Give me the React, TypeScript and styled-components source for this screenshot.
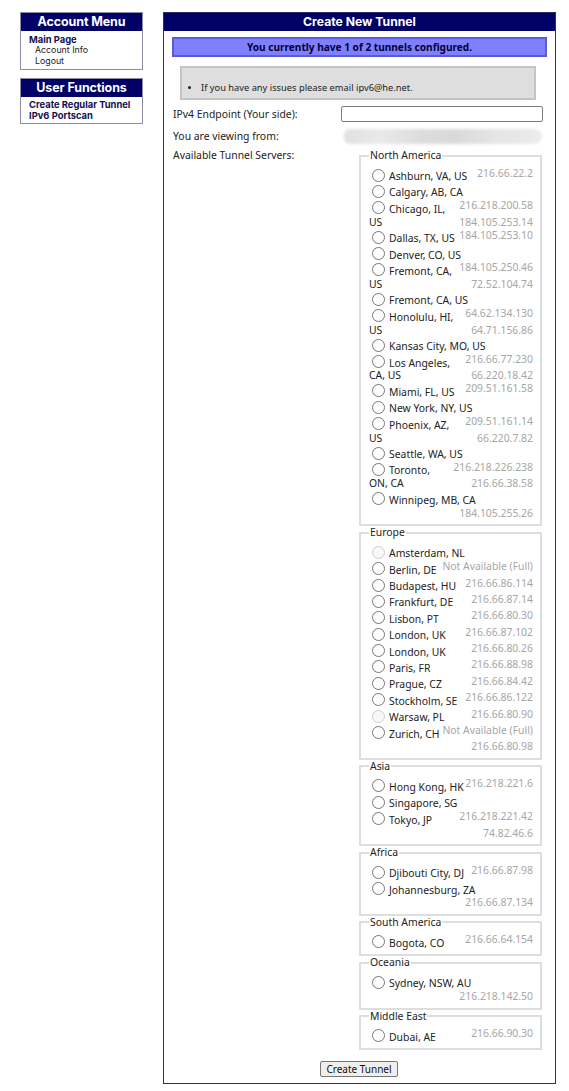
import React from 'react';
import styled, { createGlobalStyle } from 'styled-components';

const Global = createGlobalStyle`
  html, body { margin: 0; padding: 0; background: #fff; }
  body { font-family: "Noto Sans", "DejaVu Sans", sans-serif; color: #222; }
`;

const Page = styled.div`
  display: flex;
  align-items: flex-start;
  gap: 20px;
  padding: 12px 0 8px 20px;
`;

const Sidebar = styled.div`
  width: 123px;
  display: flex;
  flex-direction: column;
  gap: 8px;
`;

const MenuBox = styled.div`
  border: 1px solid #8c8ca6;
  background: #fff;
`;

const BoxTitle = styled.div`
  background: #000066;
  color: #fff;
  font-family: Inter, "Noto Sans", sans-serif;
  font-weight: 700;
  font-size: 12.5px;
  height: 18px;
  line-height: 18px;
  text-align: center;
  letter-spacing: -0.1px;
`;

const MenuList = styled.div<{ $pt: number; $pb: number }>`
  display: flex;
  flex-direction: column;
  padding: ${(p) => p.$pt}px 0 ${(p) => p.$pb}px 8px;
`;

const MenuLink = styled.a<{ $main?: boolean }>`
  font-family: Inter, "Noto Sans", sans-serif;
  font-size: ${(p) => (p.$main ? 9.4 : 8.8)}px;
  line-height: 10.6px;
  text-decoration: none;
  color: ${(p) => (p.$main ? '#11114d' : '#222')};
  font-weight: ${(p) => (p.$main ? 700 : 400)};
  padding-left: ${(p) => (p.$main ? 0 : 6)}px;
  white-space: nowrap;
`;

const Main = styled.div`
  width: 391px;
  border: 1px solid #2e2e5c;
  display: flex;
  flex-direction: column;
  padding-bottom: 6px;
`;

const MainTitle = styled.div`
  background: #000066;
  color: #fff;
  font-family: Inter, "Noto Sans", sans-serif;
  font-weight: 700;
  font-size: 12.2px;
  height: 18px;
  line-height: 18px;
  text-align: center;
`;

const Notice = styled.div`
  margin: 6px 8px 0 8px;
  height: 16px;
  background: #8080ff;
  border: 2px solid #5a5ae0;
  color: #000033;
  font-size: 10.1px;
  font-weight: 700;
  line-height: 16px;
  text-align: center;
`;

const InfoBox = styled.div`
  margin: 9px 19px 0 16px;
  height: 26px;
  background: #dedede;
  border: 2px solid #c4c4c4;
  display: flex;
  align-items: flex-end;
  padding: 0 0 4px 0;
`;

const InfoList = styled.ul`
  margin: 0;
  padding: 0 0 0 19px;
  font-size: 9.3px;
  line-height: 13px;
  color: #222;
  li::marker { font-size: 8px; }
`;

const FormGrid = styled.div`
  display: grid;
  grid-template-columns: 168px 202px;
  margin: 4px 0 0 9px;
  row-gap: 2px;
`;

const Label = styled.div<{ $top?: boolean }>`
  font-size: 10.4px;
  line-height: 13px;
  color: #222;
  height: ${(p) => (p.$top ? 'auto' : '20px')};
  display: flex;
  align-items: ${(p) => (p.$top ? 'flex-start' : 'center')};
  margin-top: ${(p) => (p.$top ? 1 : 0)}px;
  white-space: nowrap;
`;

const Cell = styled.div<{ $top?: boolean }>`
  height: ${(p) => (p.$top ? 'auto' : '20px')};
  display: flex;
  align-items: center;
  flex-direction: ${(p) => (p.$top ? 'column' : 'row')};
  margin-top: ${(p) => (p.$top ? 1 : 0)}px;
`;

const TextInput = styled.input`
  box-sizing: border-box;
  width: 202px;
  height: 16px;
  border: 1px solid #7a7a7a;
  border-radius: 2px;
  padding: 0 3px;
  font-size: 10px;
  background: #fff;
`;

const Blurred = styled.div`
  width: 198px;
  height: 15px;
  margin-left: 3px;
  border-radius: 8px 10px 10px 8px;
  background: linear-gradient(90deg, #e0e0e0 0%, #e9e9e9 18%, #dcdcdc 40%, #d9d9d9 55%, #e4e4e4 75%, #ececec 100%);
  filter: blur(1.8px);
`;

const Servers = styled.div`
  display: flex;
  flex-direction: column;
  width: 183px;
  margin-left: 18px;
  align-self: flex-start;
`;

const Region = styled.fieldset`
  margin: 0;
  border: 2px solid #dedede;
  padding: 4.5px 7px 4.5px 8px;
  min-width: 0;
`;

const Legend = styled.legend`
  font-size: 10.4px;
  line-height: 13px;
  padding: 0 1px;
  color: #222;
`;

const Line = styled.div<{ $radio: boolean }>`
  display: flex;
  justify-content: space-between;
  align-items: flex-start;
  height: ${(p) => (p.$radio ? 16.4 : 13)}px;
  font-size: 10.4px;
  line-height: 13px;
`;

const Place = styled.label<{ $radio: boolean }>`
  display: flex;
  align-items: flex-start;
  white-space: nowrap;
  color: #222;
  padding-top: ${(p) => (p.$radio ? 3.5 : 0)}px;
`;

const Radio = styled.input`
  width: 13px;
  height: 13px;
  margin: -1.5px 4px 0 3px;
  flex: none;
`;

const Ip = styled.span`
  color: #a6a6a6;
  white-space: nowrap;
  margin-left: auto;
`;

const ButtonRow = styled.div`
  display: flex;
  justify-content: center;
  margin-top: 11px;
`;

const Button = styled.button`
  font-family: "Noto Sans", sans-serif;
  font-size: 10px;
  height: 16px;
  line-height: 12px;
  padding: 0 5px;
  background: #efefef;
  border: 1px solid #767676;
  border-radius: 2px;
  color: #111;
  margin-left: -1px;
`;

type Row = [number, string, string?]; // 0 = text only, 1 = radio, 2 = disabled radio

const regions: { name: string; rows: Row[] }[] = [
  {
    name: 'North America',
    rows: [
      [1, 'Ashburn, VA, US', '216.66.22.2'],
      [1, 'Calgary, AB, CA'],
      [1, 'Chicago, IL,', '216.218.200.58'],
      [0, 'US', '184.105.253.14'],
      [1, 'Dallas, TX, US', '184.105.253.10'],
      [1, 'Denver, CO, US'],
      [1, 'Fremont, CA,', '184.105.250.46'],
      [0, 'US', '72.52.104.74'],
      [1, 'Fremont, CA, US'],
      [1, 'Honolulu, HI,', '64.62.134.130'],
      [0, 'US', '64.71.156.86'],
      [1, 'Kansas City, MO, US'],
      [1, 'Los Angeles,', '216.66.77.230'],
      [0, 'CA, US', '66.220.18.42'],
      [1, 'Miami, FL, US', '209.51.161.58'],
      [1, 'New York, NY, US'],
      [1, 'Phoenix, AZ,', '209.51.161.14'],
      [0, 'US', '66.220.7.82'],
      [1, 'Seattle, WA, US'],
      [1, 'Toronto,', '216.218.226.238'],
      [0, 'ON, CA', '216.66.38.58'],
      [1, 'Winnipeg, MB, CA'],
      [0, '', '184.105.255.26'],
    ],
  },
  {
    name: 'Europe',
    rows: [
      [2, 'Amsterdam, NL'],
      [1, 'Berlin, DE', 'Not Available (Full)'],
      [1, 'Budapest, HU', '216.66.86.114'],
      [1, 'Frankfurt, DE', '216.66.87.14'],
      [1, 'Lisbon, PT', '216.66.80.30'],
      [1, 'London, UK', '216.66.87.102'],
      [1, 'London, UK', '216.66.80.26'],
      [1, 'Paris, FR', '216.66.88.98'],
      [1, 'Prague, CZ', '216.66.84.42'],
      [1, 'Stockholm, SE', '216.66.86.122'],
      [2, 'Warsaw, PL', '216.66.80.90'],
      [1, 'Zurich, CH', 'Not Available (Full)'],
      [0, '', '216.66.80.98'],
    ],
  },
  {
    name: 'Asia',
    rows: [
      [1, 'Hong Kong, HK', '216.218.221.6'],
      [1, 'Singapore, SG'],
      [1, 'Tokyo, JP', '216.218.221.42'],
      [0, '', '74.82.46.6'],
    ],
  },
  {
    name: 'Africa',
    rows: [
      [1, 'Djibouti City, DJ', '216.66.87.98'],
      [1, 'Johannesburg, ZA'],
      [0, '', '216.66.87.134'],
    ],
  },
  {
    name: 'South America',
    rows: [[1, 'Bogota, CO', '216.66.64.154']],
  },
  {
    name: 'Oceania',
    rows: [
      [1, 'Sydney, NSW, AU'],
      [0, '', '216.218.142.50'],
    ],
  },
  {
    name: 'Middle East',
    rows: [[1, 'Dubai, AE', '216.66.90.30']],
  },
];

export default function App() {
  return (
    <>
      <Global />
      <Page>
        <Sidebar>
          <MenuBox>
            <BoxTitle>Account Menu</BoxTitle>
            <MenuList $pt={3.5} $pb={3}>
              <MenuLink $main href="#">Main Page</MenuLink>
              <MenuLink href="#">Account Info</MenuLink>
              <MenuLink href="#">Logout</MenuLink>
            </MenuList>
          </MenuBox>
          <MenuBox>
            <BoxTitle>User Functions</BoxTitle>
            <MenuList $pt={3} $pb={2}>
              <MenuLink $main href="#">Create Regular Tunnel</MenuLink>
              <MenuLink $main href="#">IPv6 Portscan</MenuLink>
            </MenuList>
          </MenuBox>
        </Sidebar>
        <Main>
          <MainTitle>Create New Tunnel</MainTitle>
          <Notice>You currently have 1 of 2 tunnels configured.</Notice>
          <InfoBox>
            <InfoList>
              <li>If you have any issues please email ipv6@he.net.</li>
            </InfoList>
          </InfoBox>
          <FormGrid>
            <Label>IPv4 Endpoint (Your side):</Label>
            <Cell>
              <TextInput type="text" />
            </Cell>
            <Label>You are viewing from:</Label>
            <Cell>
              <Blurred />
            </Cell>
            <Label $top>Available Tunnel Servers:</Label>
            <Cell $top>
              <Servers>
                {regions.map((r) => (
                  <Region key={r.name}>
                    <Legend>{r.name}</Legend>
                    {r.rows.map(([kind, text, ip], i) => (
                      <Line key={i} $radio={kind > 0}>
                        <Place $radio={kind > 0}>
                          {kind > 0 && <Radio type="radio" name="tserv" disabled={kind === 2} />}
                          {text}
                        </Place>
                        {ip && <Ip>{ip}</Ip>}
                      </Line>
                    ))}
                  </Region>
                ))}
              </Servers>
            </Cell>
          </FormGrid>
          <ButtonRow>
            <Button type="button">Create Tunnel</Button>
          </ButtonRow>
        </Main>
      </Page>
    </>
  );
}
